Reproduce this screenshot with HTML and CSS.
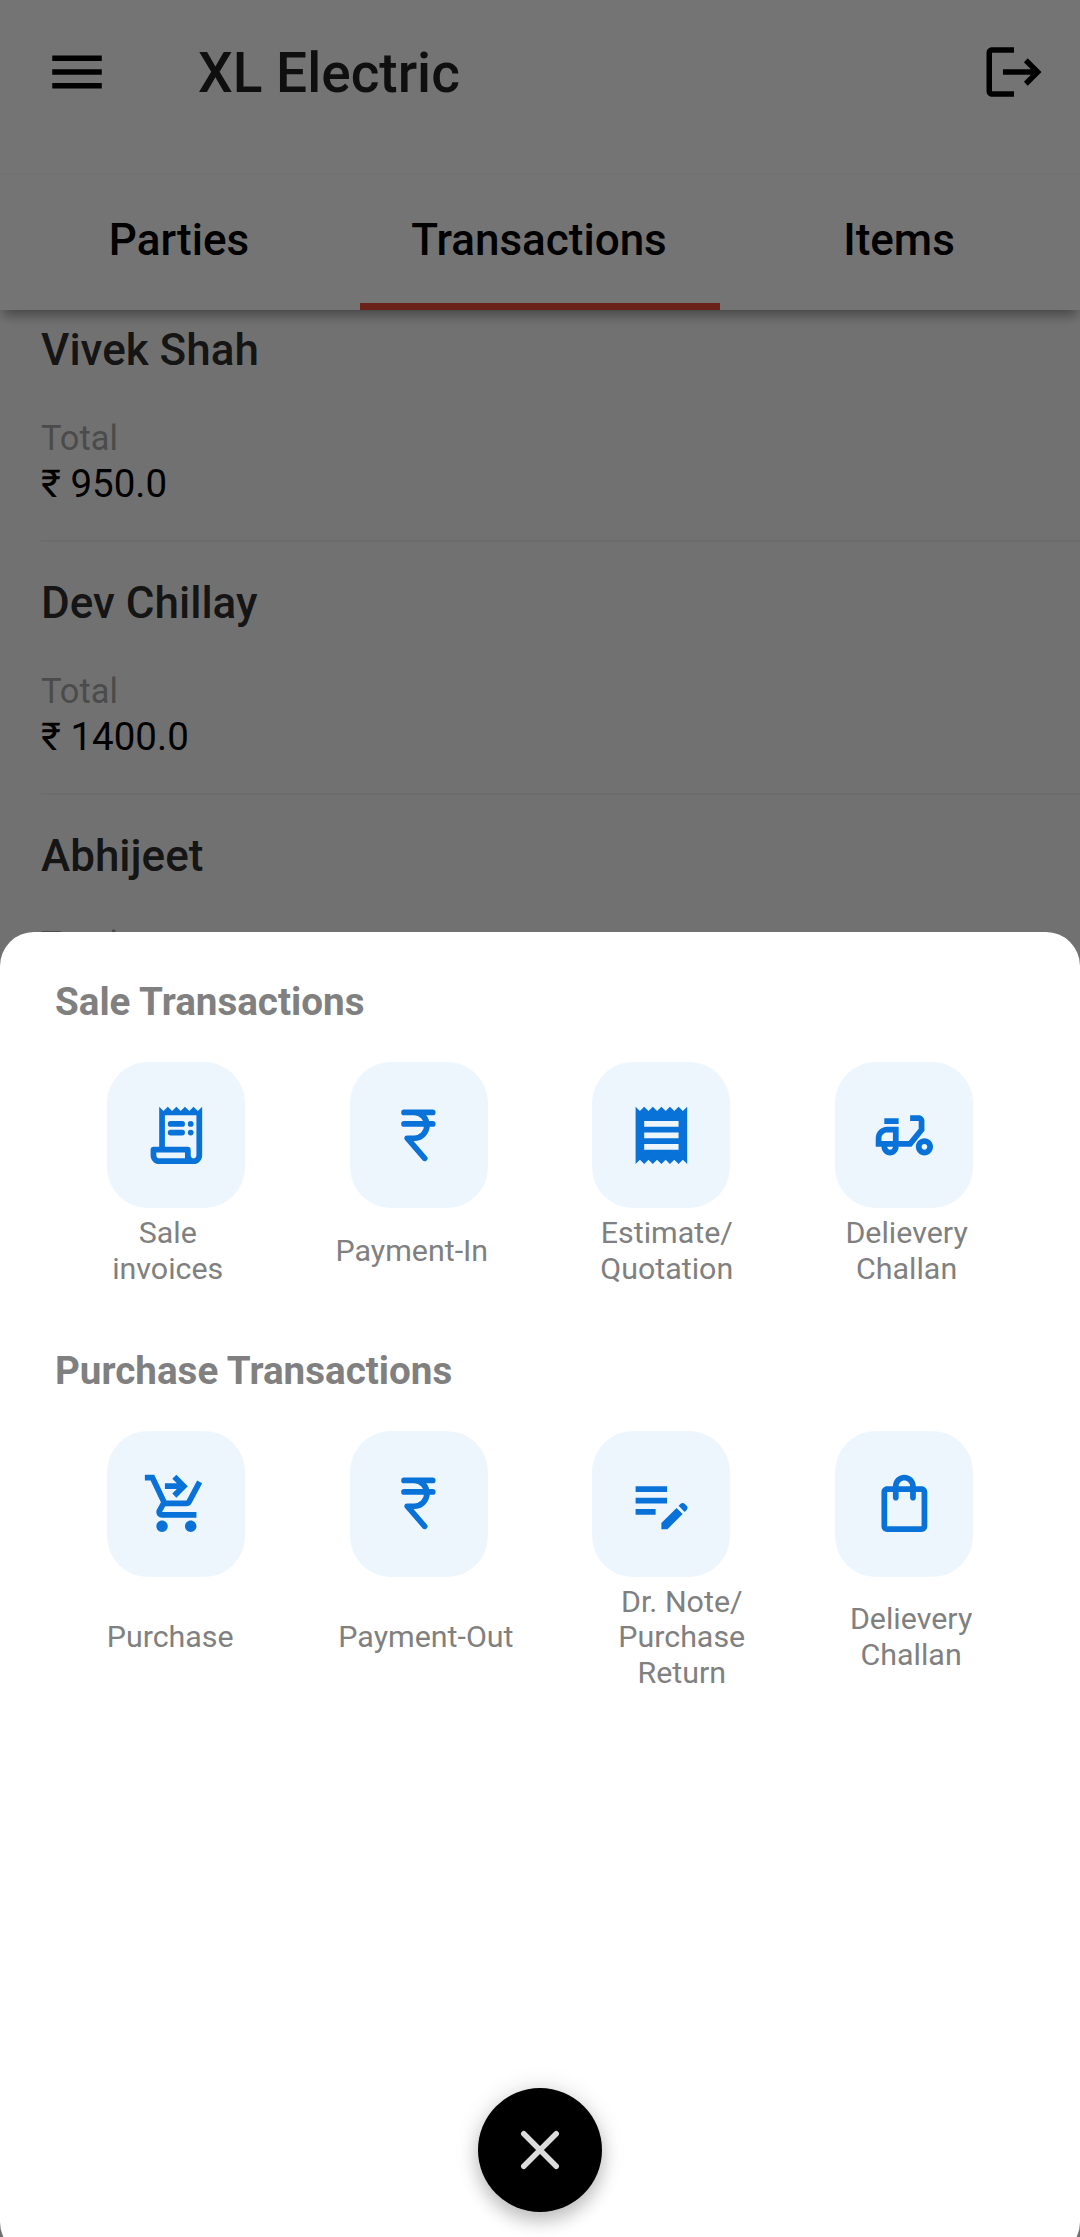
FILE: index.html
```html
<!DOCTYPE html>
<html lang="en">
<head>
<meta charset="utf-8">
<title>XL Electric</title>
<link rel="stylesheet" href="styles.css">
</head>
<body>
<div class="screen">
  <header class="app-header">
    <div class="toolbar">
      <svg class="toolbar-icon" viewBox="0 0 24 24"><path d="M3 18h18v-2H3v2zm0-5h18v-2H3v2zm0-7v2h18V6H3z"/></svg>
      <h1 class="title">XL Electric</h1>
      <svg class="toolbar-icon" viewBox="0 0 24 24"><path d="M17 7l-1.41 1.41L18.17 11H8v2h10.17l-2.58 2.58L17 17l5-5zM4 5h8V3H4c-1.1 0-2 .9-2 2v14c0 1.1.9 2 2 2h8v-2H4V5z"/></svg>
    </div>
    <nav class="tabs">
      <div class="tab">Parties</div>
      <div class="tab active">Transactions</div>
      <div class="tab">Items</div>
    </nav>
  </header>

  <main class="list">
    <article class="party">
      <h2 class="party-name">Vivek Shah</h2>
      <div class="party-label">Total</div>
      <div class="party-amount">₹ 950.0</div>
    </article>
    <article class="party">
      <h2 class="party-name">Dev Chillay</h2>
      <div class="party-label">Total</div>
      <div class="party-amount">₹ 1400.0</div>
    </article>
    <article class="party">
      <h2 class="party-name">Abhijeet</h2>
      <div class="party-label">Total</div>
    </article>
  </main>

  <div class="scrim"></div>

  <div class="sheet">
    <section class="group">
      <h3 class="group-title">Sale Transactions</h3>
      <div class="tiles">
        <div class="tile"><svg class="icon" viewBox="0 0 24 24"><path d="M19.5 3.5L18 2l-1.5 1.5L15 2l-1.5 1.5L12 2l-1.5 1.5L9 2 7.5 3.5 6 2v14H4c-.55 0-1 .45-1 1v2c0 1.66 1.34 3 3 3h12c1.66 0 3-1.34 3-3V2l-1.5 1.5zM15 20H6c-.55 0-1-.45-1-1v-1h10v2zm4-1c0 .55-.45 1-1 1s-1-.45-1-1v-2c0-.55-.45-1-1-1H8V5h11v14z"/><rect x="9" y="7" width="6" height="2" rx="1"/><rect x="16" y="7" width="2" height="2" rx="1"/><rect x="9" y="10" width="6" height="2" rx="1"/><rect x="16" y="10" width="2" height="2" rx="1"/></svg></div>
        <div class="tile"><svg class="icon line" viewBox="0 0 24 24"><path d="M7 4h10M7 8h10M10.5 4a4.5 4.5 0 0 1 0 9H8.1l6.1 7"/></svg></div>
        <div class="tile"><svg class="icon" viewBox="0 0 24 24"><path d="M18 17H6v-2h12v2zm0-4H6v-2h12v2zm0-4H6V7h12v2zM3 22l1.5-1.5L6 22l1.5-1.5L9 22l1.5-1.5L12 22l1.5-1.5L15 22l1.5-1.5L18 22l1.5-1.5L21 22V2l-1.5 1.5L18 2l-1.5 1.5L15 2l-1.5 1.5L12 2l-1.5 1.5L9 2 7.5 3.5 6 2 4.5 3.5 3 2v20z"/></svg></div>
        <div class="tile"><svg class="icon" viewBox="0 0 24 24"><path d="M19 7c0-1.1-.9-2-2-2h-3v2h3v2.65L13.52 14H10V9H6c-2.21 0-4 1.79-4 4v3h2c0 1.66 1.34 3 3 3s3-1.34 3-3h4.48L19 10.35V7zM4 14v-1c0-1.1.9-2 2-2h2v3H4zm3 3c-.55 0-1-.45-1-1h2c0 .55-.45 1-1 1z"/><path d="M5 6h5v2H5zM19 13c-1.66 0-3 1.34-3 3s1.34 3 3 3 3-1.34 3-3-1.34-3-3-3zm0 4c-.55 0-1-.45-1-1s.45-1 1-1 1 .45 1 1-.45 1-1 1z"/></svg></div>
      </div>
      <div class="labels">
        <span>Sale<br>invoices</span>
        <span>Payment-In</span>
        <span>Estimate/<br>Quotation</span>
        <span>Delievery<br>Challan</span>
      </div>
    </section>

    <section class="group">
      <h3 class="group-title">Purchase Transactions</h3>
      <div class="tiles">
        <div class="tile"><svg class="icon" viewBox="0 0 24 24"><path d="M7 18c-1.1 0-1.99.9-1.99 2S5.9 22 7 22s2-.9 2-2-.9-2-2-2zm10 0c-1.1 0-1.99.9-1.99 2s.89 2 1.99 2 2-.9 2-2-.9-2-2-2zm-8.9-5h7.45c.75 0 1.41-.41 1.75-1.03L21 4.96 19.25 4l-3.7 7H8.53L4.27 2H1v2h2l3.6 7.59-1.35 2.44C4.52 15.37 5.48 17 7 17h12v-2H7l1.1-2z"/><path d="M12 2l4 4-4 4-1.41-1.41L12.17 7H8V5h4.17l-1.59-1.59L12 2z"/></svg></div>
        <div class="tile"><svg class="icon line" viewBox="0 0 24 24"><path d="M7 4h10M7 8h10M10.5 4a4.5 4.5 0 0 1 0 9H8.1l6.1 7"/></svg></div>
        <div class="tile"><svg class="icon" viewBox="0 0 24 24"><path d="M3 10h11v2H3v-2zm0-2h11V6H3v2zm0 8h7v-2H3v2zm15.01-3.13l.71-.71c.39-.39 1.02-.39 1.41 0l.71.71c.39.39.39 1.02 0 1.41l-.71.71-2.12-2.12zm-.71.71l-5.3 5.3V21h2.12l5.3-5.3-2.12-2.12z"/></svg></div>
        <div class="tile"><svg class="icon" viewBox="0 0 24 24"><path d="M18 6h-2c0-2.21-1.79-4-4-4S8 3.79 8 6H6c-1.1 0-2 .9-2 2v12c0 1.1.9 2 2 2h12c1.1 0 2-.9 2-2V8c0-1.1-.9-2-2-2zm-6-2c1.1 0 2 .9 2 2h-4c0-1.1.9-2 2-2zm6 16H6V8h2v2c0 .55.45 1 1 1s1-.45 1-1V8h4v2c0 .55.45 1 1 1s1-.45 1-1V8h2v12z"/></svg></div>
      </div>
      <div class="labels labels-inset">
        <span>Purchase</span>
        <span>Payment-Out</span>
        <span>Dr. Note/<br>Purchase<br>Return</span>
        <span>Delievery<br>Challan</span>
      </div>
    </section>
  </div>

  <div class="close-button"><svg class="close-icon" viewBox="0 0 24 24"><path d="M6.1 6.1l11.8 11.8M17.9 6.1L6.1 17.9"/></svg></div>
</div>
</body>
</html>
```
FILE: styles.css
```css
* { box-sizing: border-box; }

body {
  margin: 0;
  font-family: Roboto, "Noto Sans", sans-serif;
}

h1, h2, h3 { margin: 0; }

.screen {
  position: relative;
  width: 1080px;
  height: 2237px;
  overflow: hidden;
  background: #f7f7f7;
}

.app-header {
  position: relative;
  z-index: 1;
  height: 310px;
  display: flex;
  flex-direction: column;
  background: #fdfdfd;
  box-shadow: 0 8px 12px -3px rgba(0, 0, 0, 0.4);
}

.toolbar {
  display: flex;
  align-items: center;
  height: 174px;
  padding: 0 33px 30px 44px;
  border-bottom: 1px solid #f4f4f4;
}

.toolbar-icon { width: 66px; height: 66px; }

.title {
  flex: 1;
  padding: 3px 0 0 88px;
  font-size: 55px;
  font-weight: 500;
  line-height: 64px;
  color: rgba(0, 0, 0, 0.87);
}

.tabs {
  flex: 1;
  display: grid;
  grid-template-columns: repeat(3, 1fr);
}

.tab {
  padding: 40px 2px 0 0;
  border-bottom: 7px solid transparent;
  text-align: center;
  font-size: 44px;
  font-weight: 500;
  line-height: 52px;
}

.tab.active { border-bottom-color: #e84a36; }

.list { margin-top: -21px; }

.party {
  margin-left: 41px;
  height: 253px;
  padding-top: 35px;
  border-bottom: 2px solid #ebebeb;
}

.party-name {
  font-size: 44px;
  font-weight: 500;
  line-height: 52px;
  color: rgba(0, 0, 0, 0.84);
}

.party-label {
  margin-top: 42px;
  font-size: 34.4px;
  line-height: 40px;
  color: #a4a4a4;
}

.party-amount {
  margin-top: 3px;
  font-size: 38.5px;
  line-height: 45px;
}

.scrim {
  position: absolute;
  inset: 0;
  z-index: 2;
  background: rgba(0, 0, 0, 0.54);
}

.sheet {
  position: absolute;
  z-index: 3;
  top: 932px;
  left: 0;
  width: 1080px;
  height: 1324px;
  padding-top: 47px;
  border-radius: 34px;
  background: #fff;
}

.group { margin-bottom: 61px; }

.group-title {
  padding-left: 55px;
  font-size: 38.6px;
  font-weight: 700;
  line-height: 45px;
  color: #808080;
}

.tiles {
  display: flex;
  justify-content: space-between;
  margin-top: 38px;
  padding: 0 107px;
}

.tile {
  display: flex;
  align-items: center;
  justify-content: center;
  width: 138px;
  height: 146px;
  border-radius: 41px;
  background: #eef6fd;
}

.icon {
  width: 68.75px;
  height: 68.75px;
  fill: #0872d8;
}

.icon.line {
  fill: none;
  stroke: #0872d8;
  stroke-width: 2;
  stroke-linecap: round;
  stroke-linejoin: round;
}

.labels {
  display: flex;
  justify-content: space-evenly;
  align-items: center;
  margin-top: 7px;
  text-align: center;
  font-size: 30.4px;
  line-height: 35.75px;
  color: #808080;
}

.labels-inset { padding: 0 3px 0 2px; }

.close-button {
  position: absolute;
  z-index: 4;
  top: 2088px;
  left: 478px;
  display: flex;
  align-items: center;
  justify-content: center;
  width: 124px;
  height: 124px;
  border-radius: 50%;
  background: #000;
  box-shadow: 0 10px 18px rgba(0, 0, 0, 0.2), 0 0 24px rgba(0, 0, 0, 0.13);
}

.close-icon {
  width: 66px;
  height: 66px;
  fill: none;
  stroke: #dcdcdc;
  stroke-width: 2;
  stroke-linecap: round;
}
```
